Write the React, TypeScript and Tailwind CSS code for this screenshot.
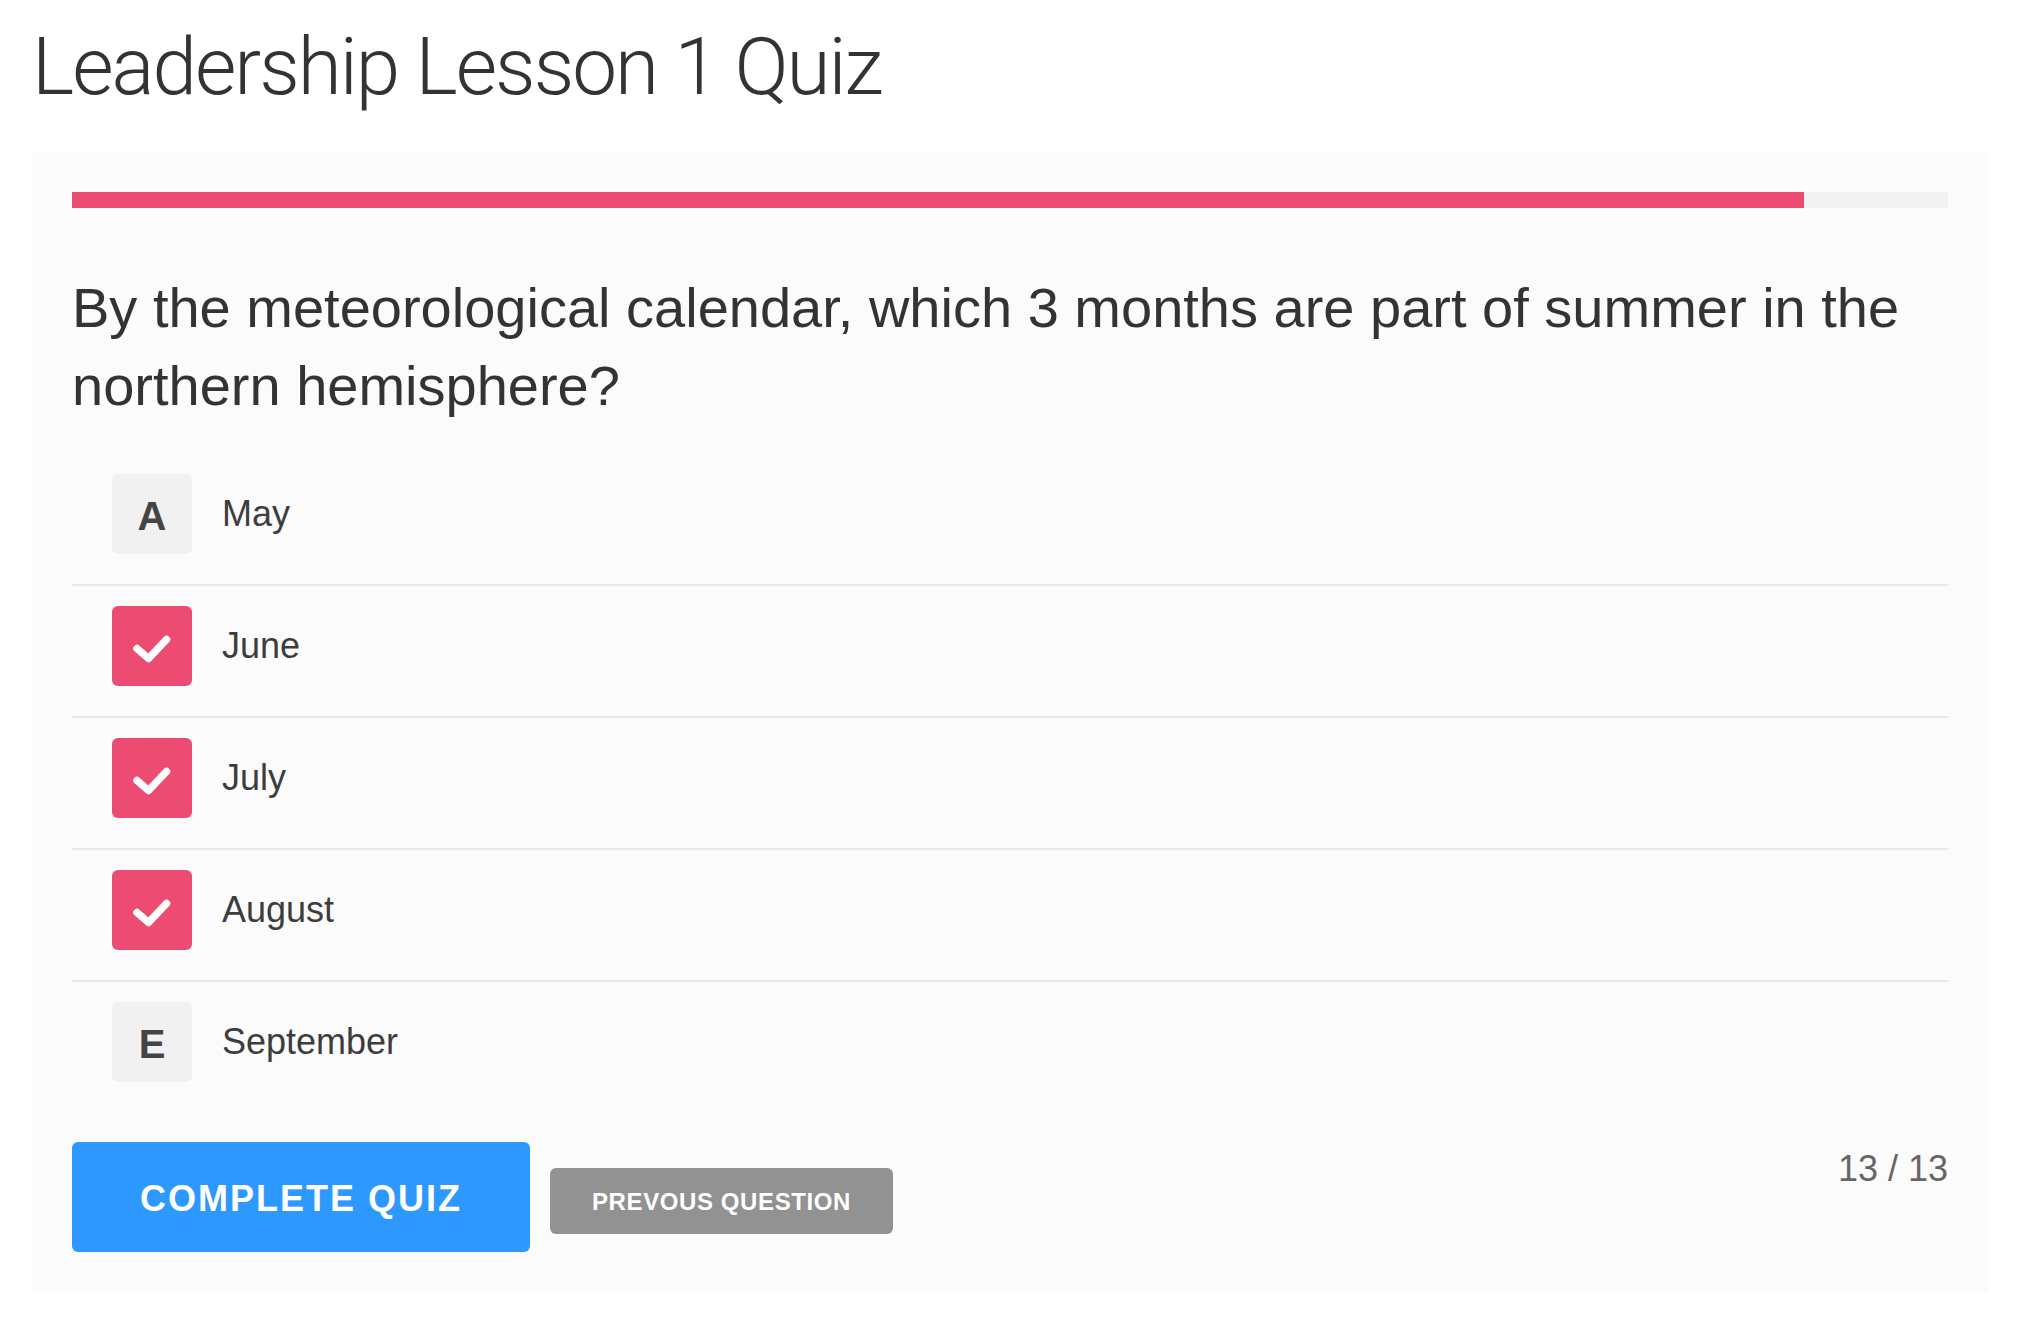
import React from 'react'

interface Option {
  letter: string
  label: string
  selected: boolean
}

const options: Option[] = [
  { letter: 'A', label: 'May', selected: false },
  { letter: 'B', label: 'June', selected: true },
  { letter: 'C', label: 'July', selected: true },
  { letter: 'D', label: 'August', selected: true },
  { letter: 'E', label: 'September', selected: false },
]

const CheckMark: React.FC = () => (
  <svg className="w-20 h-20" viewBox="0 0 80 80" fill="none">
    <polyline
      points="25,42.5 36.5,52.5 54.5,33.5"
      stroke="#ffffff"
      strokeWidth={7.5}
      strokeLinecap="round"
      strokeLinejoin="round"
    />
  </svg>
)

const OptionRow: React.FC<{ option: Option; last: boolean }> = ({ option, last }) => {
  return (
    <div className={`flex items-center pt-5 pb-[30px] ${last ? '' : 'border-b-2 border-[#e9e9e9]'}`}>
      {option.selected ? (
        <div className="ml-10 w-20 h-20 rounded-md bg-[#ec4b72] flex items-center justify-center">
          <CheckMark />
        </div>
      ) : (
        <div className="ml-10 w-20 h-20 rounded-md bg-[#f1f1f1] flex items-center justify-center pt-1 text-[40px] font-bold text-[#444444] leading-none">
          {option.letter}
        </div>
      )}
      <span className="ml-[30px] text-[36px] leading-none text-[#3d3d3d]">{option.label}</span>
    </div>
  )
}

export default function App() {
  const current = 12
  const total = 13

  return (
    <div className="min-h-screen bg-white px-8 font-['Liberation_Sans',Arial,sans-serif]">
      <h1 className="pt-[23px] font-['Roboto',sans-serif] font-light text-[80px] leading-[88px] tracking-[-2px] text-[#333333]">
        Leadership Lesson 1 Quiz
      </h1>

      <div className="mt-[41px] bg-[#fbfbfb] px-10 pt-10 pb-10">
        {/* progress */}
        <div className="h-4 w-full bg-[#f2f2f2]">
          <div className="h-4 bg-[#ec4b72]" style={{ width: `${(current / total) * 100}%` }} />
        </div>

        <h2 className="mt-[61px] text-[56px] leading-[1.4] text-[#333333]">
          By the meteorological calendar, which 3 months are part of summer in the northern hemisphere?
        </h2>

        <div className="mt-[28px]">
          {options.map((o, i) => (
            <OptionRow key={o.letter} option={o} last={i === options.length - 1} />
          ))}
        </div>

        <div className="mt-[30px] flex items-start justify-between">
          <div className="flex items-start gap-5">
            <button className="w-[458px] h-[110px] rounded-md bg-[#2d98fd] text-white text-[36px] font-bold tracking-[2px] flex items-center justify-center pt-1">
              COMPLETE QUIZ
            </button>
            <button className="mt-[26px] w-[343px] h-[66px] rounded-md bg-[#929292] text-white text-[24px] font-bold tracking-[0.6px] flex items-center justify-center pt-0.5">
              PREVOUS QUESTION
            </button>
          </div>
          <div className="mt-[9.5px] text-[36px] leading-none text-[#666666]">13 / 13</div>
        </div>
      </div>
    </div>
  )
}
